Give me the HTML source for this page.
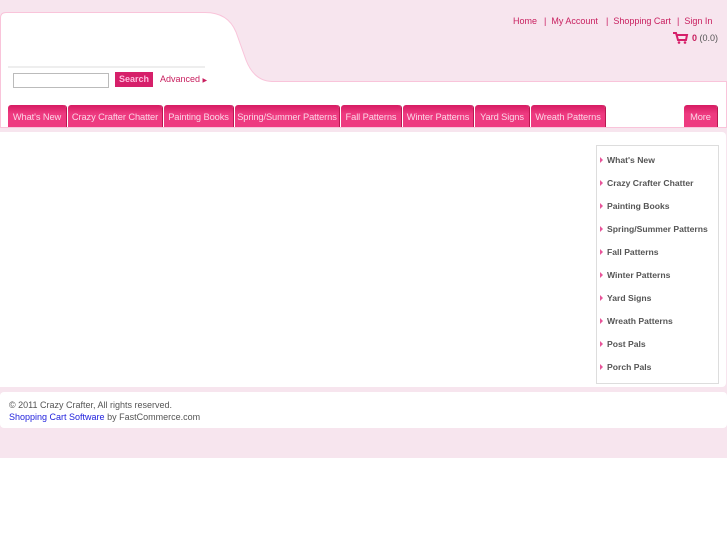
<!DOCTYPE html>
<html><head><style>
body{margin:0;width:727px;height:545px;background:#fff;font-family:"Liberation Sans",sans-serif;position:relative;overflow:hidden}
.a{position:absolute}
.pink{background:#f7e5ee}
.tab{position:absolute;top:105px;height:22px;background:linear-gradient(#d61b62,#ee3a80 40%,#ee3a80);color:#fbd6e6;font-size:9.3px;line-height:24px;text-align:center;border-radius:3px 3px 0 0;box-shadow:1px 0 0 #b81850;white-space:nowrap;letter-spacing:-0.1px}
.side{position:absolute;left:600px;font-size:8.6px;font-weight:bold;color:#555;white-space:nowrap}
.side:before{content:"";display:inline-block;border-left:3px solid #e8559a;border-top:3px solid transparent;border-bottom:3px solid transparent;margin-right:4px}
.tl{position:absolute;top:16px;font-size:9px;color:#c81e5e;white-space:nowrap}
</style></head><body>
<div class="a pink" style="left:0;top:0;width:727px;height:458px"></div>
<svg class="a" style="left:0;top:0" width="727" height="135">
<path d="M0.5 18 Q0.5 12.5 6 12.5 L205 12.5 Q228 12.5 236 32 L246 60 Q254 81 272 81.5 L726.5 81.5 L726.5 127.5 L0.5 127.5 Z" fill="#fff" stroke="#f9c4da" stroke-width="1"/>
<line x1="8" y1="67" x2="205" y2="67" stroke="#ddd" stroke-width="1"/>
</svg>
<div class="a" style="left:13px;top:73px;width:94px;height:13px;border:1px solid #bbb;background:#fff"></div>
<div class="a" style="left:115px;top:72px;width:38px;height:15px;background:#d6206a;color:#fbd;font-size:9px;font-weight:bold;line-height:15px;text-align:center">Search</div>
<div class="a" style="left:160px;top:74px;font-size:9px;color:#c81e5e">Advanced <span style="font-size:6px">&#9654;</span></div>
<div class="tl" style="left:513px">Home</div>
<div class="tl" style="left:544px">|&nbsp; My Account</div>
<div class="tl" style="left:606px">|&nbsp; Shopping Cart</div>
<div class="tl" style="left:677px">|&nbsp; Sign In</div>
<svg class="a" style="left:673px;top:32px" width="16" height="12"><path d="M0 1H3L5 8H13L14 3H4" fill="none" stroke="#d6206a" stroke-width="2"/><circle cx="6" cy="10.5" r="1.3" fill="#d6206a"/><circle cx="12" cy="10.5" r="1.3" fill="#d6206a"/></svg>
<div class="a" style="left:692px;top:33px;font-size:9px;color:#555"><b style="color:#c81e5e">0</b> (0.0)</div>
<div class="tab" style="left:8px;width:58px">What's New</div>
<div class="tab" style="left:68px;width:94px">Crazy Crafter Chatter</div>
<div class="tab" style="left:164px;width:69px">Painting Books</div>
<div class="tab" style="left:235px;width:104px">Spring/Summer Patterns</div>
<div class="tab" style="left:341px;width:60px">Fall Patterns</div>
<div class="tab" style="left:403px;width:70px">Winter Patterns</div>
<div class="tab" style="left:475px;width:54px">Yard Signs</div>
<div class="tab" style="left:531px;width:74px">Wreath Patterns</div>
<div class="tab" style="left:684px;width:33px">More</div>
<div class="a" style="left:0;top:132px;width:726px;height:255px;background:#fff;border-radius:0 4px 4px 0"></div>
<div class="a" style="left:596px;top:145px;width:121px;height:237px;border:1px solid #ddd"></div>
<div class="side" style="top:155px">What's New</div>
<div class="side" style="top:178px">Crazy Crafter Chatter</div>
<div class="side" style="top:201px">Painting Books</div>
<div class="side" style="top:224px">Spring/Summer Patterns</div>
<div class="side" style="top:247px">Fall Patterns</div>
<div class="side" style="top:270px">Winter Patterns</div>
<div class="side" style="top:293px">Yard Signs</div>
<div class="side" style="top:316px">Wreath Patterns</div>
<div class="side" style="top:339px">Post Pals</div>
<div class="side" style="top:362px">Porch Pals</div>
<div class="a" style="left:0;top:392px;width:727px;height:36px;background:#fff;border-radius:4px"></div>
<div class="a" style="left:9px;top:399px;font-size:9px;color:#555;line-height:12px">© 2011 Crazy Crafter, All rights reserved.<br><span style="color:#2222dd">Shopping Cart Software</span> by FastCommerce.com</div>
</body></html>
